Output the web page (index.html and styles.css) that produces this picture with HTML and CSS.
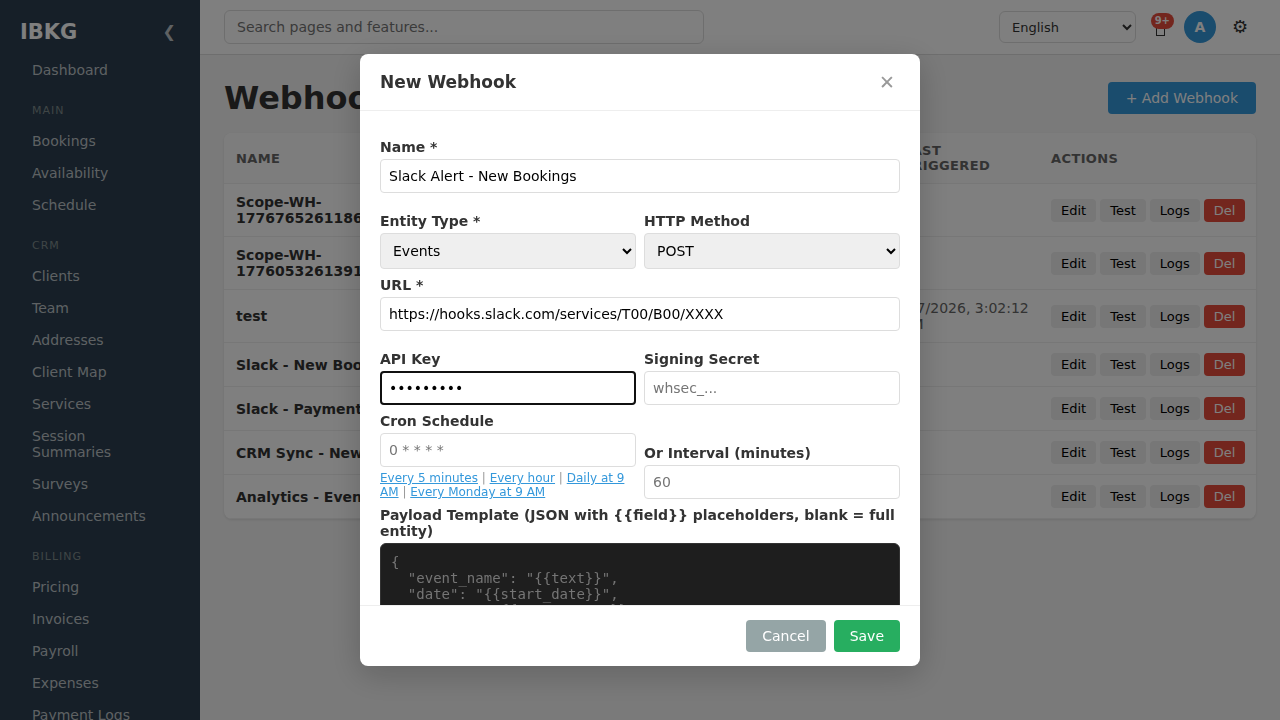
FILE: index.html
```html
<!DOCTYPE html>
<html lang="en">
<head>
<meta charset="utf-8">
<meta name="viewport" content="width=device-width, initial-scale=1">
<title>Webhooks - IBKG</title>
<link rel="stylesheet" href="styles.css">
</head>
<body>
<div class="app">
  <aside class="sidebar">
    <div class="brand">
      <span class="brand-name">IBKG</span>
      <button class="collapse" type="button" aria-label="Collapse sidebar">❮</button>
    </div>
    <nav class="nav">
      <a href="#">Dashboard</a>
      <h2>Main</h2>
      <a href="#">Bookings</a>
      <a href="#">Availability</a>
      <a href="#">Schedule</a>
      <h2>CRM</h2>
      <a href="#">Clients</a>
      <a href="#">Team</a>
      <a href="#">Addresses</a>
      <a href="#">Client Map</a>
      <a href="#">Services</a>
      <a href="#">Session Summaries</a>
      <a href="#">Surveys</a>
      <a href="#">Announcements</a>
      <h2>Billing</h2>
      <a href="#">Pricing</a>
      <a href="#">Invoices</a>
      <a href="#">Payroll</a>
      <a href="#">Expenses</a>
      <a href="#">Payment Logs</a>
    </nav>
  </aside>
  <div class="page">
    <header class="topbar">
      <input class="search" type="search" placeholder="Search pages and features..." aria-label="Search pages and features">
      <div class="tools">
        <select class="language" aria-label="Language"><option>English</option></select>
        <button class="bell" type="button" aria-label="Notifications">
          <svg width="10" height="14" viewBox="0 0 10 14" aria-hidden="true"><rect x="1.5" y="0.5" width="8" height="13" fill="none" stroke="currentColor"/></svg>
          <span class="badge">9+</span>
        </button>
        <button class="avatar" type="button" aria-label="Account">A</button>
        <button class="gear" type="button" aria-label="Settings">⚙</button>
      </div>
    </header>
    <main class="content">
      <div class="heading">
        <h1>Webhooks</h1>
        <button class="btn btn-primary" type="button">+ Add Webhook</button>
      </div>
      <div class="card">
        <table>
          <colgroup><col class="col-name"><col><col><col><col class="col-last"><col class="col-actions"></colgroup>
          <thead>
            <tr><th>Name</th><th>Entity</th><th>Method</th><th>Status</th><th>Last Triggered</th><th>Actions</th></tr>
          </thead>
          <tbody>
            <tr><td class="name">Scope-WH-1776765261186</td><td></td><td></td><td></td><td></td><td><div class="actions"><button type="button">Edit</button><button type="button">Test</button><button type="button">Logs</button><button class="del" type="button">Del</button></div></td></tr>
            <tr><td class="name">Scope-WH-1776053261391</td><td></td><td></td><td></td><td></td><td><div class="actions"><button type="button">Edit</button><button type="button">Test</button><button type="button">Logs</button><button class="del" type="button">Del</button></div></td></tr>
            <tr><td class="name">test</td><td></td><td></td><td></td><td class="date">4/7/2026, 3:02:12 PM</td><td><div class="actions"><button type="button">Edit</button><button type="button">Test</button><button type="button">Logs</button><button class="del" type="button">Del</button></div></td></tr>
            <tr><td class="name">Slack - New Bookings</td><td></td><td></td><td></td><td></td><td><div class="actions"><button type="button">Edit</button><button type="button">Test</button><button type="button">Logs</button><button class="del" type="button">Del</button></div></td></tr>
            <tr><td class="name">Slack - Payments</td><td></td><td></td><td></td><td></td><td><div class="actions"><button type="button">Edit</button><button type="button">Test</button><button type="button">Logs</button><button class="del" type="button">Del</button></div></td></tr>
            <tr><td class="name">CRM Sync - New</td><td></td><td></td><td></td><td></td><td><div class="actions"><button type="button">Edit</button><button type="button">Test</button><button type="button">Logs</button><button class="del" type="button">Del</button></div></td></tr>
            <tr><td class="name">Analytics - Events</td><td></td><td></td><td></td><td></td><td><div class="actions"><button type="button">Edit</button><button type="button">Test</button><button type="button">Logs</button><button class="del" type="button">Del</button></div></td></tr>
          </tbody>
        </table>
      </div>
    </main>
  </div>
</div>

<div class="overlay">
  <form class="modal" role="dialog" aria-modal="true" aria-labelledby="modal-title">
    <header class="modal-header">
      <h2 id="modal-title">New Webhook</h2>
      <button class="close" type="button" aria-label="Close">✕</button>
    </header>
    <div class="modal-body">
      <div class="field field-single">
        <label for="name">Name *</label>
        <input id="name" type="text" value="Slack Alert - New Bookings">
      </div>
      <div class="row">
        <div class="field">
          <label for="entity">Entity Type *</label>
          <select id="entity"><option>Events</option></select>
        </div>
        <div class="field">
          <label for="method">HTTP Method</label>
          <select id="method"><option>POST</option></select>
        </div>
      </div>
      <div class="field field-single">
        <label for="url">URL *</label>
        <input id="url" type="text" value="https://hooks.slack.com/services/T00/B00/XXXX">
      </div>
      <div class="row">
        <div class="field">
          <label for="key">API Key</label>
          <input id="key" class="active" type="password" value="sk-secret">
        </div>
        <div class="field">
          <label for="secret">Signing Secret</label>
          <input id="secret" type="text" placeholder="whsec_...">
        </div>
      </div>
      <div class="row">
        <div class="field">
          <label for="cron">Cron Schedule</label>
          <input id="cron" type="text" placeholder="0 * * * *">
          <div class="presets"><a href="#">Every 5 minutes</a> | <a href="#">Every hour</a> | <a href="#">Daily at 9 AM</a> | <a href="#">Every Monday at 9 AM</a></div>
        </div>
        <div class="field">
          <label for="interval">Or Interval (minutes)</label>
          <input id="interval" type="text" placeholder="60">
        </div>
      </div>
      <div class="field">
        <label for="payload">Payload Template (JSON with {{field}} placeholders, blank = full entity)</label>
        <textarea id="payload" rows="6" placeholder='{
  "event_name": "{{text}}",
  "date": "{{start_date}}",
  "source": "{{source_name}}"
}'></textarea>
      </div>
    </div>
    <footer class="modal-footer">
      <button class="btn btn-cancel" type="button">Cancel</button>
      <button class="btn btn-save" type="submit">Save</button>
    </footer>
  </form>
</div>
</body>
</html>
```
FILE: styles.css
```css
* { box-sizing: border-box; }

body {
  margin: 0;
  background: #f5f5f5;
  color: #333;
  font-family: "DejaVu Sans", sans-serif;
  font-size: 14px;
  line-height: 16px;
}

h1, h2 { margin: 0; }

button, input, select { font: inherit; }

button { border: 0; cursor: pointer; }

.app {
  display: flex;
  height: 100vh;
  overflow: hidden;
}

/* Sidebar */
.sidebar {
  flex: 0 0 200px;
  background: #2c3e50;
  overflow: hidden;
}

.brand {
  display: flex;
  align-items: center;
  justify-content: space-between;
  height: 54px;
  padding: 10px 20px 0;
}

.brand-name {
  color: #fff;
  font-size: 21px;
  font-weight: bold;
}

.collapse {
  padding: 0 4px;
  background: none;
  color: #bdc3c7;
  font-size: 16px;
}

.nav a {
  display: block;
  padding: 8px 40px 8px 32px;
  color: #bdc3c7;
  text-decoration: none;
}

.nav h2 {
  padding: 18px 32px 8px;
  color: #7f8c8d;
  font-size: 11px;
  font-weight: normal;
  letter-spacing: 1px;
  line-height: 13px;
  text-transform: uppercase;
}

/* Top bar */
.page { flex: 1; min-width: 0; }

.topbar {
  display: flex;
  align-items: center;
  justify-content: space-between;
  padding: 10px 24px;
  background: #fff;
  border-bottom: 1px solid #ddd;
}

.search {
  flex: 0 1 480px;
  height: 34px;
  padding: 0 12px;
  background: #fff;
  border: 1px solid #ddd;
  border-radius: 6px;
}

.tools { display: flex; align-items: center; gap: 8px; }

.language {
  width: 137px;
  height: 32px;
  padding: 0 8px;
  background: #fff;
  border: 1px solid #ddd;
  border-radius: 6px;
  color: #333;
  font-size: 13px;
}

.bell, .gear {
  position: relative;
  width: 32px;
  height: 32px;
  padding: 0;
  background: none;
  color: #333;
  font-size: 18px;
}

.bell {
  display: flex;
  align-items: flex-end;
  justify-content: center;
  padding-bottom: 7px;
}

.badge {
  position: absolute;
  top: 2px;
  right: 2px;
  padding: 0 4px;
  background: #e74c3c;
  border-radius: 8px;
  color: #fff;
  font-size: 10px;
  font-weight: bold;
  line-height: 16px;
}

.avatar {
  width: 32px;
  height: 32px;
  padding: 0;
  background: #3498db;
  border-radius: 50%;
  color: #fff;
  font-size: 14px;
  font-weight: bold;
}

/* Content */
.content { padding: 24px; }

.heading {
  display: flex;
  align-items: center;
  justify-content: space-between;
  margin-bottom: 16px;
}

.heading h1 { font-size: 32px; line-height: 38px; }

.btn {
  height: 32px;
  padding: 0 16px;
  border-radius: 4px;
  color: #fff;
}

.btn-primary { padding: 0 18px; background: #3498db; }
.btn-cancel { background: #95a5a6; }
.btn-save { background: #27ae60; }

.card {
  background: #fff;
  border-radius: 8px;
  box-shadow: 0 1px 3px rgba(0, 0, 0, 0.1);
  overflow: hidden;
}

table {
  width: 100%;
  border-collapse: separate;
  border-spacing: 0;
  table-layout: fixed;
}

.col-name { width: 200px; }
.col-last { width: 148px; }
.col-actions { width: 217px; }

th, td {
  padding: 10px 12px;
  border-bottom: 1px solid #eee;
  text-align: left;
}

th {
  background: #fafafa;
  color: #666;
  font-size: 13px;
  letter-spacing: 0.03em;
  line-height: 15px;
  text-transform: uppercase;
}

.name { font-weight: bold; }
.date { padding-right: 8px; color: #666; }

.actions { display: flex; gap: 4px; }

.actions button {
  padding: 4px 10px;
  background: #eee;
  border-radius: 4px;
  color: #000;
  font-size: 13px;
  line-height: 15px;
}

.actions .del { background: #e74c3c; color: #fff; }

/* Dialog */
.overlay {
  position: fixed;
  inset: 0;
  display: flex;
  align-items: center;
  justify-content: center;
  background: rgba(0, 0, 0, 0.5);
}

.modal {
  display: flex;
  flex-direction: column;
  width: 560px;
  max-width: 95%;
  max-height: 85vh;
  background: #fff;
  border-radius: 8px;
  box-shadow: 0 8px 32px rgba(0, 0, 0, 0.2);
}

.modal-header {
  display: flex;
  align-items: center;
  justify-content: space-between;
  padding: 16px 20px;
  border-bottom: 1px solid #eee;
}

.modal-header h2 { font-size: 17px; line-height: 24px; }

.close {
  padding: 0 5px;
  background: none;
  color: #999;
  font-size: 19px;
  line-height: 24px;
}

.modal-body {
  flex: 1;
  min-height: 0;
  padding: 20px;
  overflow-y: auto;
  scrollbar-width: none;
}

.field { display: flex; flex-direction: column; }

.modal-body > .field, .row { margin-top: 8px; }

.modal-body > .field-single { margin-bottom: 20px; }

.field-single + .row { margin-top: 0; }

.row {
  display: grid;
  grid-template-columns: 1fr 1fr;
  align-items: end;
  gap: 8px;
}

.field label { margin-bottom: 4px; font-weight: bold; }

.field input, .field select {
  width: 100%;
  height: 34px;
  padding: 0 8px;
  background: #fff;
  border: 1px solid #ddd;
  border-radius: 4px;
  color: #000;
}

.field select { height: 36px; background: #efefef; }

.field input.active { outline: 2px solid #101010; outline-offset: -2px; }

.presets {
  margin-top: 4px;
  color: #999;
  font-size: 12px;
  line-height: 14px;
}

.presets a { color: #3498db; }

textarea {
  padding: 10px;
  background: #1e1e1e;
  border: 1px solid #333;
  border-radius: 6px;
  color: #d4d4d4;
  font-family: "DejaVu Sans Mono", monospace;
  font-size: 14px;
  line-height: 16px;
  resize: vertical;
}

.modal-footer {
  display: flex;
  justify-content: flex-end;
  gap: 8px;
  padding: 14px 20px;
  border-top: 1px solid #eee;
}
```
